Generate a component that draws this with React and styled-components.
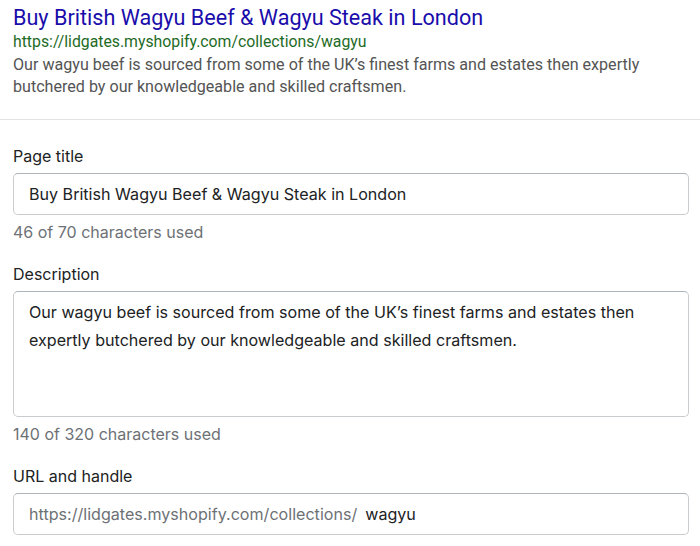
import React from "react";
import styled, { createGlobalStyle } from "styled-components";

const GlobalStyle = createGlobalStyle`
  html, body {
    margin: 0;
    padding: 0;
    background: #ffffff;
  }
  * {
    box-sizing: border-box;
  }
`;

const Page = styled.div`
  width: 700px;
  height: 546px;
  overflow: hidden;
  background: #ffffff;
  font-family: Inter, "Noto Sans", sans-serif;
`;

const Preview = styled.div`
  padding: 5px 13px 21px;
  border-bottom: 1px solid #e1e3e5;
  font-family: Roboto, "Liberation Sans", Arial, sans-serif;
`;

const PreviewTitle = styled.div`
  color: #1a0dab;
  font-size: 21.6px;
  line-height: 26px;
`;

const PreviewUrl = styled.div`
  color: #1e6b26;
  font-size: 15.8px;
  line-height: 22px;
`;

const PreviewDesc = styled.div`
  color: #545454;
  font-size: 16.1px;
  line-height: 22px;
  margin-top: 1px;
`;

const Form = styled.div`
  display: flex;
  flex-direction: column;
  gap: 22px;
  padding: 26px 11px 0 13px;
`;

const Field = styled.div`
  display: flex;
  flex-direction: column;
`;

const Label = styled.label`
  color: #202223;
  font-size: 16px;
  line-height: 20px;
  margin-bottom: 7px;
`;

const InputBox = styled.div`
  display: flex;
  align-items: ${(p) => (p.$multiline ? "flex-start" : "center")};
  height: ${(p) => (p.$multiline ? "126px" : "42px")};
  padding: ${(p) => (p.$multiline ? "6px 15px" : "0 15px")};
  border: 1px solid #c9cccf;
  border-top-color: #aeb4b9;
  border-radius: 5px;
  color: #202223;
  font-size: 16.1px;
  line-height: 28px;
`;

const Prefix = styled.span`
  color: #6d7175;
  margin-right: 8px;
`;

const Help = styled.div`
  color: #6d7175;
  font-size: 16px;
  line-height: 20px;
  margin-top: 7px;
`;

export default function App() {
  return (
    <Page>
      <GlobalStyle />
      <Preview>
        <PreviewTitle>Buy British Wagyu Beef &amp; Wagyu Steak in London</PreviewTitle>
        <PreviewUrl>https://lidgates.myshopify.com/collections/wagyu</PreviewUrl>
        <PreviewDesc>
          Our wagyu beef is sourced from some of the UK’s finest farms and estates then expertly
          butchered by our knowledgeable and skilled craftsmen.
        </PreviewDesc>
      </Preview>
      <Form>
        <Field>
          <Label>Page title</Label>
          <InputBox>Buy British Wagyu Beef &amp; Wagyu Steak in London</InputBox>
          <Help>46 of 70 characters used</Help>
        </Field>
        <Field>
          <Label>Description</Label>
          <InputBox $multiline>
            Our wagyu beef is sourced from some of the UK’s finest farms and estates then expertly
            butchered by our knowledgeable and skilled craftsmen.
          </InputBox>
          <Help>140 of 320 characters used</Help>
        </Field>
        <Field>
          <Label>URL and handle</Label>
          <InputBox>
            <Prefix>https://lidgates.myshopify.com/collections/</Prefix>
            wagyu
          </InputBox>
        </Field>
      </Form>
    </Page>
  );
}
